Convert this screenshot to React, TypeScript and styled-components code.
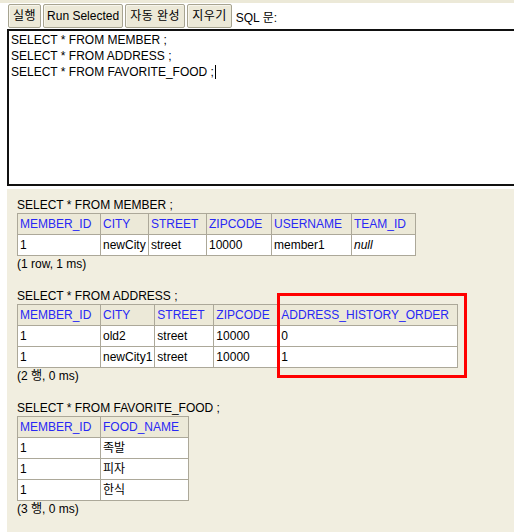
import React from "react";
import styled, { createGlobalStyle } from "styled-components";

const Global = createGlobalStyle`
  html, body { margin: 0; padding: 0; background: #ffffff; }
  body {
    font-family: "Liberation Sans", Arial, "Noto Sans CJK KR", sans-serif;
    font-size: 12px;
    color: #000;
    overflow: hidden;
  }
`;

const FONT = `"Liberation Sans", Arial, "Noto Sans CJK KR", sans-serif`;

const Page = styled.div`
  width: 514px;
  height: 532px;
  overflow: hidden;
  display: flex;
  flex-direction: column;
`;

const TopStrip = styled.div`
  height: 3px;
  background: #ece9d8;
  flex: none;
`;

const Toolbar = styled.div`
  height: 26px;
  display: flex;
  align-items: center;
  padding-left: 8px;
  gap: 2px;
  flex: none;
`;

const ToolButton = styled.button<{ $ko?: boolean; $pad?: number }>`
  height: 24px;
  padding: 0 ${(p) => p.$pad ?? 4}px;
  background: #ece9d8;
  border: 1px solid #a7a491;
  border-radius: 2px;
  box-shadow: inset 1px 1px 0 #f7f5ec;
  font-family: ${FONT};
  font-size: 12px;
  letter-spacing: ${(p) => (p.$ko ? "0.5px" : "0")};
  color: #000;
  line-height: 22px;
  cursor: pointer;
`;

const ToolLabel = styled.span`
  margin-left: 2px;
  font-size: 12px;
  color: #000;
`;

const Editor = styled.div`
  margin-left: 7px;
  width: 520px;
  height: 151px;
  border: 2px solid #111;
  border-right: none;
  padding: 1px 2px;
  box-sizing: content-box;
  background: #fff;
  font-family: ${FONT};
  font-size: 12px;
  line-height: 16px;
  flex: none;
`;

const EditorLine = styled.div`
  white-space: pre;
`;

const Caret = styled.span`
  display: inline-block;
  width: 1px;
  height: 14px;
  background: #000;
  vertical-align: -3px;
  margin-left: 1px;
`;

const Results = styled.div`
  margin-top: 3px;
  margin-left: 7px;
  flex: 1;
  background: #f1eee0;
  padding: 8px 0 0 10px;
  display: flex;
  flex-direction: column;
  gap: 16px;
`;

const Block = styled.div`
  position: relative;
  display: flex;
  flex-direction: column;
  align-items: flex-start;
`;

const Caption = styled.div`
  line-height: 16px;
  white-space: pre;
`;

const Table = styled.table`
  border-collapse: collapse;
  table-layout: fixed;
  border: 1px solid #aca899;
  font-family: ${FONT};
  font-size: 12px;
`;

const Th = styled.th<{ $w: number }>`
  width: ${(p) => p.$w}px;
  box-sizing: border-box;
  height: 21px;
  padding: 0 2px;
  text-align: left;
  font-weight: normal;
  color: #2828f5;
  background: #ece9d8;
  border: 1px solid #aca899;
  line-height: 14px;
  white-space: nowrap;
  overflow: hidden;
`;

const Td = styled.td<{ $italic?: boolean }>`
  height: 21px;
  box-sizing: border-box;
  padding: 0 2px;
  background: #fff;
  border: 1px solid #aca899;
  line-height: 14px;
  white-space: nowrap;
  font-style: ${(p) => (p.$italic ? "italic" : "normal")};
`;

const Highlight = styled.div`
  position: absolute;
  border: 3px solid #ff0000;
  box-sizing: border-box;
  pointer-events: none;
`;

type Col = { name: string; w: number };
type Result = {
  sql: string;
  cols: Col[];
  rows: string[][];
  footer: string;
  highlight?: { left: number; top: number; width: number; height: number };
};

const results: Result[] = [
  {
    sql: "SELECT * FROM MEMBER ;",
    cols: [
      { name: "MEMBER_ID", w: 83 },
      { name: "CITY", w: 48 },
      { name: "STREET", w: 58 },
      { name: "ZIPCODE", w: 65 },
      { name: "USERNAME", w: 80 },
      { name: "TEAM_ID", w: 64 },
    ],
    rows: [["1", "newCity", "street", "10000", "member1", "null"]],
    footer: "(1 row, 1 ms)",
  },
  {
    sql: "SELECT * FROM ADDRESS ;",
    cols: [
      { name: "MEMBER_ID", w: 83 },
      { name: "CITY", w: 54 },
      { name: "STREET", w: 59 },
      { name: "ZIPCODE", w: 65 },
      { name: "ADDRESS_HISTORY_ORDER", w: 179 },
    ],
    rows: [
      ["1", "old2", "street", "10000", "0"],
      ["1", "newCity1", "street", "10000", "1"],
    ],
    footer: "(2 행, 0 ms)",
    highlight: { left: 260, top: 5, width: 190, height: 85 },
  },
  {
    sql: "SELECT * FROM FAVORITE_FOOD ;",
    cols: [
      { name: "MEMBER_ID", w: 83 },
      { name: "FOOD_NAME", w: 88 },
    ],
    rows: [
      ["1", "족발"],
      ["1", "피자"],
      ["1", "한식"],
    ],
    footer: "(3 행, 0 ms)",
  },
];

const editorLines = [
  "SELECT * FROM MEMBER ;",
  "SELECT * FROM ADDRESS ;",
  "SELECT * FROM FAVORITE_FOOD ;",
];

export default function App() {
  return (
    <Page>
      <Global />
      <TopStrip />
      <Toolbar>
        <ToolButton $ko>실행</ToolButton>
        <ToolButton $pad={3}>Run Selected</ToolButton>
        <ToolButton $ko>자동 완성</ToolButton>
        <ToolButton $ko>지우기</ToolButton>
        <ToolLabel>SQL 문:</ToolLabel>
      </Toolbar>
      <Editor>
        {editorLines.map((l, i) => (
          <EditorLine key={i}>
            {l}
            {i === editorLines.length - 1 && <Caret />}
          </EditorLine>
        ))}
      </Editor>
      <Results>
        {results.map((r, bi) => (
          <Block key={bi}>
            <Caption>{r.sql}</Caption>
            <Table>
              <thead>
                <tr>
                  {r.cols.map((c) => (
                    <Th key={c.name} $w={c.w}>
                      {c.name}
                    </Th>
                  ))}
                </tr>
              </thead>
              <tbody>
                {r.rows.map((row, ri) => (
                  <tr key={ri}>
                    {row.map((v, ci) => (
                      <Td key={ci} $italic={v === "null"}>
                        {v}
                      </Td>
                    ))}
                  </tr>
                ))}
              </tbody>
            </Table>
            <Caption>{r.footer}</Caption>
            {r.highlight && (
              <Highlight
                style={{
                  left: r.highlight.left,
                  top: r.highlight.top,
                  width: r.highlight.width,
                  height: r.highlight.height,
                }}
              />
            )}
          </Block>
        ))}
      </Results>
    </Page>
  );
}
